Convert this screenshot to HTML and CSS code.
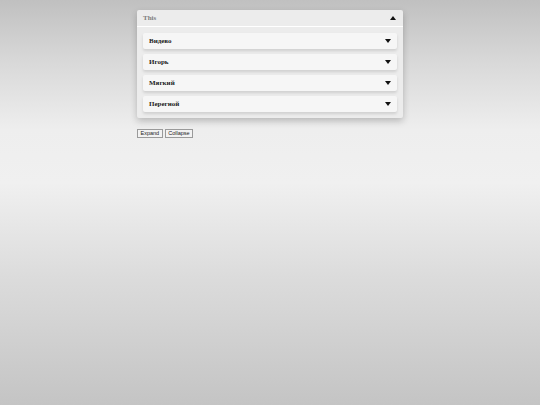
FILE: index.html
```html
<!DOCTYPE html>
<html lang="ru">
<head>
  <meta charset="UTF-8">
  <title>Accordion</title>
  <link rel="stylesheet" href="styles.css">
</head>
<body>
  <div class="wrap">
    <div class="panel">
      <div class="panel-head">
        <span>This</span>
        <span class="tri up"></span>
      </div>
      <div class="panel-body">
        <div class="item"><span>Видево</span><span class="tri down"></span></div>
        <div class="item"><span>Игорь</span><span class="tri down"></span></div>
        <div class="item"><span>Мягкий</span><span class="tri down"></span></div>
        <div class="item"><span>Перегной</span><span class="tri down"></span></div>
      </div>
    </div>
    <div class="actions">
      <button type="button">Expand</button>
      <button type="button">Collapse</button>
    </div>
  </div>
</body>
</html>
```

FILE: styles.css
```css
/* Fondo e contenitore */
html, body {
  height: 100%;
}

body {
  margin: 0;
  background: linear-gradient(to bottom, #c0c0c0 0%, #d8d8d8 15%, #eeeeee 32%, #f0f0f0 45%, #dcdcdc 68%, #c4c4c4 100%);
  font-family: "Liberation Serif", "Times New Roman", serif;
}

.wrap {
  width: 266px;
  margin: 10px auto 0;
}

/* Pannello */
.panel {
  background: #ececec;
  border-radius: 2px;
  box-shadow: 0 3px 7px rgba(0, 0, 0, 0.22);
}

.panel-head {
  display: flex;
  justify-content: space-between;
  align-items: center;
  height: 16px;
  padding: 0 7px 0 6px;
  border-bottom: 1px solid #ffffff;
  font-size: 7px;
  font-weight: bold;
  color: #7c7c7c;
}

.panel-body {
  display: flex;
  flex-direction: column;
  gap: 5px;
  padding: 6px;
}

.item {
  display: flex;
  justify-content: space-between;
  align-items: center;
  height: 16px;
  padding: 0 6px 0 6px;
  background: #f6f6f6;
  border-radius: 2px;
  box-shadow: 0 2px 3px rgba(0, 0, 0, 0.12);
  font-size: 7px;
  font-weight: bold;
  color: #222;
}

/* Triangoli */
.tri {
  width: 0;
  height: 0;
  border-left: 3px solid transparent;
  border-right: 3px solid transparent;
}
.tri.down { border-top: 4px solid #111; }
.tri.up { border-bottom: 4px solid #111; }

/* Pulsanti */
.actions {
  display: flex;
  gap: 2px;
  margin-top: 11px;
}

.actions button {
  font-family: "Liberation Sans", Arial, sans-serif;
  font-size: 5.5px;
  height: 9px;
  padding: 0 2.5px;
  border: 1px solid #9a9a9a;
  background: #f2f2f2;
  color: #222;
  line-height: 1;
}
```
